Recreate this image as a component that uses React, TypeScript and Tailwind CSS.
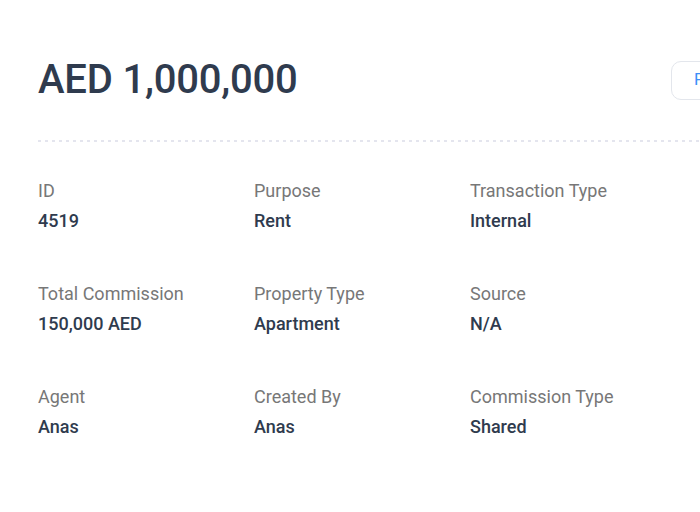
const details = [
  { label: 'ID', value: '4519' },
  { label: 'Purpose', value: 'Rent' },
  { label: 'Transaction Type', value: 'Internal' },
  { label: 'Total Commission', value: '150,000 AED' },
  { label: 'Property Type', value: 'Apartment' },
  { label: 'Source', value: 'N/A' },
  { label: 'Agent', value: 'Anas' },
  { label: 'Created By', value: 'Anas' },
  { label: 'Commission Type', value: 'Shared' },
];

export default function App() {
  return (
    <div
      className="w-[700px] h-[512px] overflow-hidden bg-white"
      style={{ fontFamily: 'Roboto, "Noto Sans", sans-serif' }}
    >
      <div className="w-[800px] pl-[38px] pt-[56px]">
        {/* Header */}
        <div className="flex items-center">
          <h1 className="w-[633px] shrink-0 text-[40px] leading-[48px] font-medium text-[#2f3b4e] tracking-[-0.2px]">
            AED 1,000,000
          </h1>
          <button className="h-[39px] shrink-0 rounded-[10px] border-[1.5px] border-[#e3e6ec] px-[22px] text-[17px] text-[#3d8ef8]">
            Print
          </button>
        </div>

        <div className="mt-[36px] h-[2px] w-[720px] bg-[linear-gradient(to_right,#e4e5ee_3px,transparent_3px)] bg-[length:7px_2px]" />

        {/* Details grid */}
        <div className="mt-[37px] grid grid-cols-[216px_216px_216px] gap-y-[49px]">
          {details.map((d) => (
            <div key={d.label} className="flex flex-col">
              <span className="text-[18px] leading-[24px] text-[#777777]">{d.label}</span>
              <span className="mt-[6px] text-[18px] leading-[24px] font-medium text-[#2f3b4e]">
                {d.value}
              </span>
            </div>
          ))}
        </div>
      </div>
    </div>
  );
}
